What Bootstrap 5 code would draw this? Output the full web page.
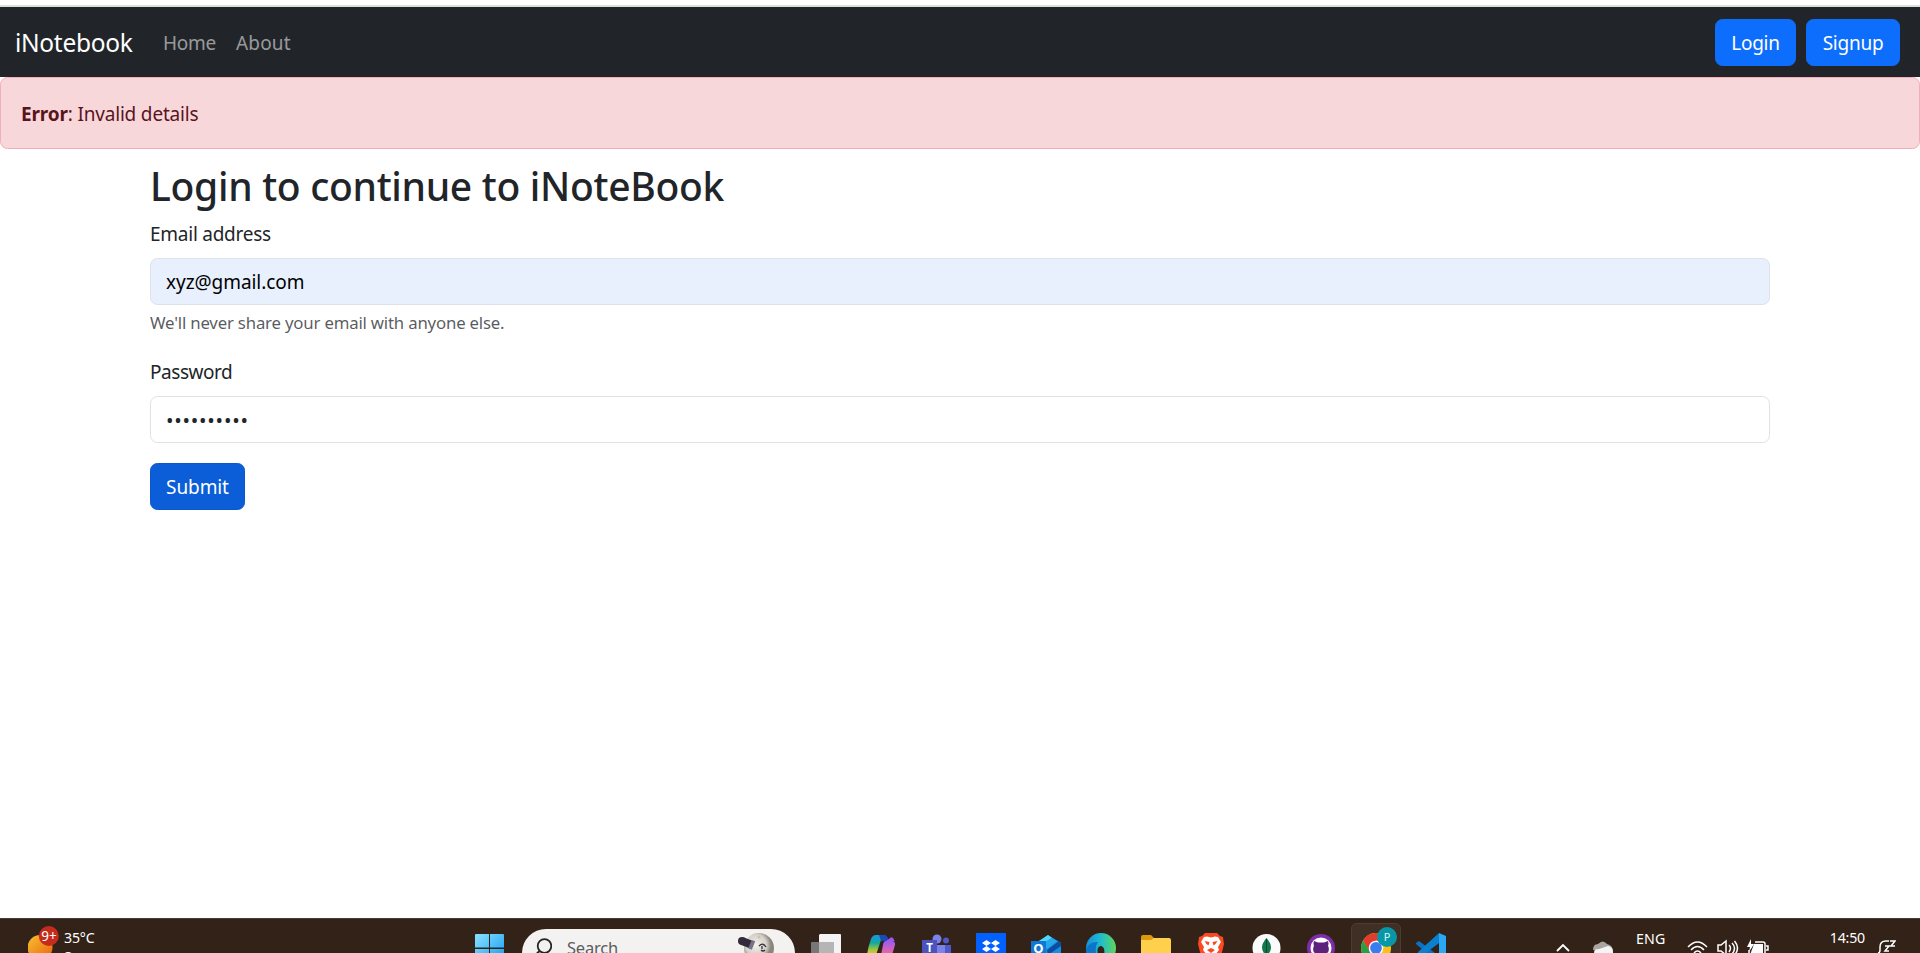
<!DOCTYPE html>
<html lang="en">
<head>
<meta charset="utf-8">
<meta name="viewport" content="width=device-width, initial-scale=1">
<title>iNotebook</title>
<link href="https://cdn.jsdelivr.net/npm/bootstrap@5.3.0/dist/css/bootstrap.min.css" rel="stylesheet">
<style>
html{font-size:20px}
body{font-family:"Noto Sans","Open Sans",sans-serif;height:953px;overflow:hidden;background:#fff}
.topline{height:7px;border-bottom:2px solid #dadfe0}
.t{font-size:19px;letter-spacing:-.25px}
.navbar-brand{width:118px;font-size:24.5px;line-height:37.5px;letter-spacing:-.3px;white-space:nowrap;padding-top:7.25px;padding-bottom:5.25px}
.btn,.form-control,.nav-link{font-size:19px;line-height:30px;letter-spacing:-.25px}
.nav-link{padding-top:11px;padding-bottom:9px}
.btn{padding:8.5px 0 6.5px;border-radius:7.5px}
.w-login{width:81px}.w-signup{width:94px}
.w-submit{width:95px;padding:7.5px 0;letter-spacing:-.1px}
.nav-home{width:73px}
.navbar-nav .nav-item:last-child .nav-link{letter-spacing:.15px}
.page{max-width:1650px;padding-top:11px}
.page h2{font-size:39px;line-height:51px;margin-bottom:7px;font-weight:500;letter-spacing:-.3px}
.alert{--bs-alert-color:#58151c;border-radius:7.5px;line-height:30px;padding-top:21px;padding-bottom:19px}
.form-label{line-height:32px;margin-bottom:8px}
.form-control{border-radius:7.5px}
#email{letter-spacing:-.05px}
#password{font-size:20px;letter-spacing:.75px;padding-top:8.5px;padding-bottom:6.5px}
.autofill,.autofill:focus{background:#e8f0fe;color:#000}
.form-text{font-size:16.8px;line-height:26.25px;letter-spacing:-.19px}
.taskbar{height:35px;background:#332217;border-top:1px solid #4a3a30;color:#fff;font-size:14px;overflow:hidden}
.taskbar svg{display:block;flex:none}
.left-zone{width:475px;padding-left:28px}
.wtext{font-size:14.2px;line-height:19px;letter-spacing:-.2px;padding:9px 0 0 5px}
.searchpill{width:273px;height:48px;margin:10px 16px 0 18px;background:#f3f2f1;border-radius:24px;color:#5c5c5c;font-size:16.5px;letter-spacing:-.2px;padding-left:14px}
.searchpill span{padding:11px 0 0 15px}
.slot{width:55px;flex:none}
.tray{font-size:14.2px;line-height:20px;letter-spacing:-.2px}
</style>
</head>
<body class="d-flex flex-column">
<div class="topline flex-shrink-0"></div>
<nav class="navbar navbar-expand-lg navbar-dark bg-dark">
  <div class="container-fluid">
    <a class="navbar-brand" href="#">iNotebook</a>
    <ul class="navbar-nav me-auto">
      <li class="nav-item nav-home"><a class="nav-link" href="#">Home</a></li>
      <li class="nav-item"><a class="nav-link" href="#">About</a></li>
    </ul>
    <div class="d-flex">
      <a class="btn btn-primary mx-1 w-login" href="#">Login</a>
      <a class="btn btn-primary mx-1 w-signup" href="#">Signup</a>
    </div>
  </div>
</nav>
<div class="alert alert-danger mb-0" role="alert"><span class="t" style="letter-spacing:-.18px"><strong>Error</strong>: Invalid details</span></div>
<main class="container page flex-grow-1">
  <h2>Login to continue to iNoteBook</h2>
  <form>
    <div class="mb-3">
      <label for="email" class="form-label t d-block">Email address</label>
      <input type="email" class="form-control autofill" id="email" value="xyz@gmail.com">
      <div class="form-text">We'll never share your email with anyone else.</div>
    </div>
    <div class="mb-3">
      <label for="password" class="form-label t d-block" style="letter-spacing:-.45px">Password</label>
      <input type="password" class="form-control" id="password" value="abcdefghij">
    </div>
    <button type="button" class="btn btn-primary w-submit" style="--bs-btn-bg:#0b5ed7;--bs-btn-border-color:#0a58ca">Submit</button>
  </form>
</main>
<footer class="taskbar d-flex flex-shrink-0">
  <div class="left-zone d-flex flex-shrink-0">
    <svg width="31" height="35" viewBox="0 0 31 35">
      <defs><linearGradient id="sun" x1="0" y1="0" x2="1" y2="1"><stop stop-color="#f3c32f"/><stop offset="1" stop-color="#ee6010"/></linearGradient></defs>
      <circle cx="12" cy="28.500" r="12.500" fill="url(#sun)"/><circle cx="20.800" cy="17" r="10" fill="#c42b1c"/>
      <text x="21" y="22" text-anchor="middle" font-size="13.500" letter-spacing="0" fill="#fff">9+</text>
    </svg>
    <div class="wtext">35°C<br>Sunny</div>
  </div>
  <svg width="29" height="35" viewBox="0 0 29 35">
    <defs><linearGradient id="win" gradientUnits="userSpaceOnUse" x1="0" y1="15" x2="29" y2="44"><stop stop-color="#8be0ff"/><stop offset="1" stop-color="#0f9bf0"/></linearGradient></defs>
    <path fill="url(#win)" d="M1 15h13v13.500H0V16q0-1 1-1zM15 15h13q1 0 1 1v12.500H15zM0 30h14v14H0zM15 30h14v14H15z"/>
  </svg>
  <div class="searchpill d-flex flex-shrink-0">
    <svg width="16" height="25" viewBox="0 0 16 25"><circle cx="8.500" cy="17" r="6.800" fill="none" stroke="#252525" stroke-width="1.800"/><path d="M3.500 22L0 25.500" stroke="#252525" stroke-width="2"/></svg>
    <span class="lh-1">Search</span>
    <svg class="ms-auto" style="margin-right:20px" width="38" height="25" viewBox="0 0 38 25">
      <defs><radialGradient id="moon" cx=".4" cy=".4"><stop stop-color="#f4f1ec"/><stop offset=".7" stop-color="#d5d1c9"/><stop offset="1" stop-color="#8a857d"/></radialGradient></defs>
      <circle cx="22" cy="19" r="15" fill="url(#moon)"/><circle cx="22" cy="8" r="1.500" fill="#c3c3bf"/>
      <path d="M5 12L14 15.500" stroke="#342a3c" stroke-width="8"/><circle cx="5" cy="12" r="4" fill="#342a3c"/><path d="M13 15.100l3.500 1.400" stroke="#77708a" stroke-width="9"/><path d="M22 17q4-4 7 1M25 17v3m3 1q-2 2-4 0" fill="none" stroke="#34313b" stroke-width="1.300"/>
    </svg>
  </div>
  <div class="slot"><svg width="30" height="35" viewBox="0 0 30 35"><path fill="#f4f4f4" d="M9 15h20q1 0 1 1v20H8V16z"/><path fill="#777" d="M0 24q0-1 1-1h7v14H0z"/><path fill="#b5b5b5" d="M8 23h15v13H8z"/></svg></div>
  <div class="slot"><svg width="30" height="35" viewBox="0 0 30 35">
    <defs><linearGradient id="cp1" x1="0" y1="0" x2="0" y2="1"><stop stop-color="#1597e8"/><stop offset=".4" stop-color="#16a99a"/><stop offset=".75" stop-color="#a7c83a"/><stop offset="1" stop-color="#f4c321"/></linearGradient><linearGradient id="cp2" x1="0" y1="0" x2="0" y2="1"><stop stop-color="#9c5af0"/><stop offset="1" stop-color="#f2689e"/></linearGradient></defs>
    <path fill="url(#cp1)" d="M10 16h10q-4 1-6 8l-4 12H1q1-8 4-16 1.500-4 5-4z"/><path fill="#174bb5" d="M13 16h5q4 0 4.500 6H15z"/><path fill="url(#cp2)" d="M20 22h6q3.500 0 3 4l-3 10H15l2-10q.5-4 3-4z"/><path fill="#a256ec" d="M20 22h8.500q-.5-3-3-4z"/></svg></div>
  <div class="slot"><svg width="30" height="35" viewBox="0 0 30 35"><circle cx="16" cy="20" r="4.500" fill="#7b83eb"/><circle cx="25" cy="21.500" r="3" fill="#5059c9"/><path fill="#5059c9" d="M22 26h8v10h-8z"/><path fill="#7b83eb" d="M10 26h14v10H10z"/><path fill="#4b53bc" d="M1 21h15v15H1z"/><text x="8.500" y="33" text-anchor="middle" font-size="11.500" font-weight="700" fill="#fff">T</text></svg></div>
  <div class="slot"><svg width="30" height="35" viewBox="0 0 30 35"><path fill="#0061fe" d="M0 14h30v21H0z"/><path fill="#fff" d="M10.500 21l4.500 3-4.500 3L6 24zm9 0l4.500 3-4.500 3-4.500-3zm-9 6l4.500 3-4.500 3L6 30zm9 0l4.500 3-4.500 3-4.500-3z"/></svg></div>
  <div class="slot"><svg width="30" height="35" viewBox="0 0 30 35"><path fill="#1490df" d="M5 24L17 16l13 8v12H5z"/><path fill="#50d9ff" d="M8 22l9-6 4 3-10 6z"/><path fill="#28a8ea" d="M12 24l9-5 5 3-10 8z"/><path fill="#0a4ea2" d="M16 31l12-9 2 2v3L17 36z"/><path fill="#0f78d4" d="M0 22h15v14H0z"/><text x="7.500" y="33.500" text-anchor="middle" font-size="13" font-weight="700" fill="#fff">O</text></svg></div>
  <div class="slot"><svg width="30" height="35" viewBox="0 0 30 35"><defs><linearGradient id="ed"><stop stop-color="#168ee0"/><stop offset=".5" stop-color="#20bdcb"/><stop offset="1" stop-color="#5fd65b"/></linearGradient></defs><circle cx="15" cy="29" r="15" fill="url(#ed)"/><path d="M0 30q4-8 12-7-3 3-2 13H0z" fill="#0b75c8"/><path d="M12 36q-2-9 3.500-9 4 2 2.500 9z" fill="#332217"/></svg></div>
  <div class="slot"><svg width="30" height="35" viewBox="0 0 30 35"><path fill="#dc9a0c" d="M0 18q0-2 2-2h8l3 3v4H0z"/><path fill="#ffd04c" d="M0 21h10l3-2h15q2 0 2 2v15H0z"/></svg></div>
  <div class="slot"><svg width="30" height="35" viewBox="0 0 30 35"><path fill="#fb4a20" d="M9 14h12l3 3 3 1 .5 4 .5 3-3 12H5L2 25l.5-3 .5-4 3-1z"/><path fill="#fff" d="M8 18l3-.5 4 1 4-1 3 .5 3 5-3 5 1 3-4 5h-8l-4-5 1-3-3-5z"/><path fill="#fb4a20" d="M8.500 22l5 1-1 3.500-2-1.500zm13 0l-5 1 1 3.500 2-1.500zM11 31l4-2 4 2-4 3z"/></svg></div>
  <div class="slot"><svg width="30" height="35" viewBox="0 0 30 35"><circle cx="15.500" cy="29" r="14" fill="#fbfbfb"/><path fill="#10784a" d="M15.500 19q-9 10 0 18 9-8 0-18z"/><path d="M15.500 20v16" stroke="#054a2c"/></svg></div>
  <div class="slot"><svg width="30" height="35" viewBox="0 0 30 35"><circle cx="15" cy="29" r="14" fill="#7d2da8"/><circle cx="15" cy="29" r="10.500" fill="#fff"/><path fill="#5b237c" d="M8 22l4 1.500h6l4-1.500q1 3 0 4.500 3 8-4.500 8.500v2h-5v-2q-7.500-.5-4.500-8.500-1-1.500 0-4.500z"/></svg></div>
  <div class="slot"><svg style="margin-left:-10px" width="50" height="35" viewBox="0 0 50 35"><rect x=".5" y="4.500" width="49" height="49" rx="5" fill="#402f24" stroke="#4d3c31"/><circle cx="25" cy="29" r="15" fill="#fbc116"/><path fill="#e33b2e" d="M12 21.500A15 15 0 0 1 38 21.500H25l-6.500 11z"/><path fill="#28a04a" d="M12 21.500L21 36H12a15 15 0 0 1 0-14.500z"/><circle cx="25" cy="29" r="7.300" fill="#fff"/><circle cx="25" cy="29" r="5.900" fill="#3b7bf0"/><circle cx="36" cy="18" r="10" fill="#0797a7"/><text x="36" y="22" text-anchor="middle" font-size="11" fill="#d9f7f5">P</text></svg></div>
  <div class="slot"><svg width="30" height="35" viewBox="0 0 30 35"><path fill="#0873c4" d="M0 24l3-2 20 15h-9L0 25z"/><path fill="#0b80cf" d="M23 14L2 33v4h4l17-13z"/><path fill="#29a8f3" d="M23 14l7 3v20h-7z"/></svg></div>
  <div class="tray ms-auto d-flex flex-shrink-0" style="width:364px">
    <svg width="14" height="35" viewBox="0 0 14 35"><path d="M1 32l6-6 6 6" fill="none" stroke="#fff" stroke-width="1.800"/></svg>
    <svg style="margin-left:23px" width="20" height="35" viewBox="0 0 20 35"><path d="M0 31q0-6 5-6 5-5 9 0 6 1 6 8z" fill="#a9a5a1"/><path d="M2 36q-3-6 4-6l9-3q5 1 5 6v3z" fill="#f5f5f5"/></svg>
    <span style="margin-left:23px;width:51px;padding-top:10px;letter-spacing:.15px">ENG</span>
    <svg width="82" height="35" viewBox="0 0 82 35" fill="none" stroke="#fff" stroke-width="1.500"><path d="M1 28q9.500-10 19 0M4 31q6.500-7 13 0M7 34q3.500-4 7 0"/><path d="M31 26h3l5-4v14l-5-4h-3zM42 26q3 3 0 7M45 24q5 5 0 11M47.500 22q6 7 0 14"/><path d="M68 23h8q2 0 2 2v9q0 2-2 2H62v-5M79 27h2v4h-2"/><path d="M67 25h9v11H63z" fill="#fff" stroke="none"/><path d="M64 20l-4 8h3l-1 5 5-8h-3z" fill="#fff" stroke="none"/></svg>
    <div class="text-end" style="width:98px;padding-right:2px;padding-top:9px;line-height:19.500px">14:50<br>01-09-2025</div>
    <svg style="margin-left:11px" width="18" height="35" viewBox="0 0 18 35" fill="none" stroke="#fff" stroke-width="1.500"><path d="M0 34q2 0 2-3v-3q0-6 6-6h3M7 27h4l-4 5h4M12 22h5l-4 5h4"/></svg>
  </div>
</footer>
<script src="https://cdn.jsdelivr.net/npm/bootstrap@5.3.0/dist/js/bootstrap.bundle.min.js"></script>
</body>
</html>
